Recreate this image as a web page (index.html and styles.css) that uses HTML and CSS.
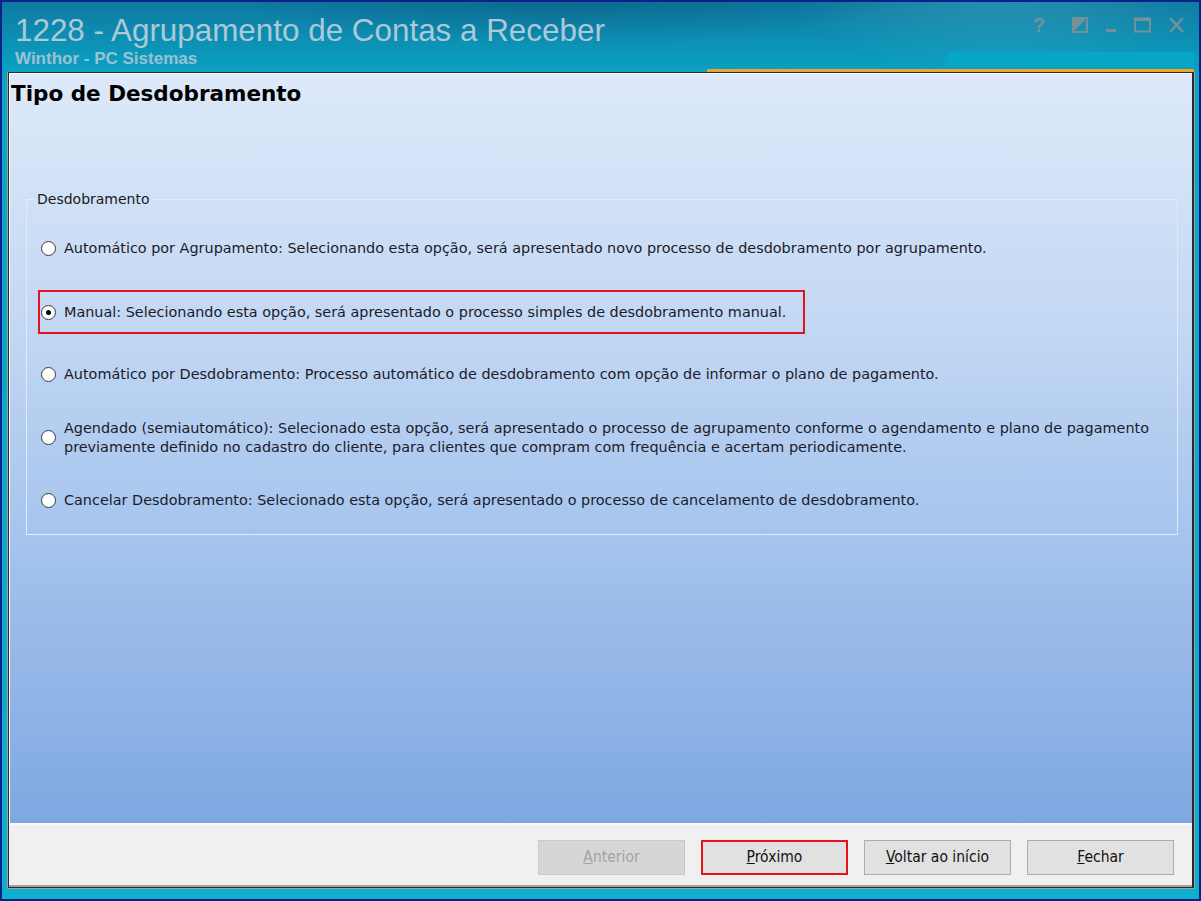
FILE: index.html
```html
<!DOCTYPE html>
<html lang="pt-BR">
<head>
    <meta charset="UTF-8">
    <title>1228 - Agrupamento de Contas a Receber</title>
    <link rel="stylesheet" href="styles.css">
</head>
<body>

<div class="window">

    <!-- Title bar -->
    <div class="titlebar">
        <div class="titles">
            <div class="title">1228 - Agrupamento de Contas a Receber</div>
            <div class="subtitle">Winthor - PC Sistemas</div>
        </div>
        <div class="controls">
            <span class="ctl help">?</span>
            <svg class="ctl" width="16" height="16" viewBox="0 0 16 16">
                <rect x="1" y="1" width="14" height="14" fill="none" stroke="#76909a" stroke-width="2"/>
                <polygon points="1,15 15,1 1,1" fill="#76909a"/>
            </svg>
            <svg class="ctl" width="12" height="16" viewBox="0 0 12 16">
                <rect x="1" y="12" width="10" height="3" fill="#76909a"/>
            </svg>
            <svg class="ctl" width="17" height="16" viewBox="0 0 17 16">
                <rect x="1" y="1.5" width="15" height="13" fill="none" stroke="#76909a" stroke-width="2"/>
                <rect x="1" y="1" width="15" height="3" fill="#76909a"/>
            </svg>
            <svg class="ctl" width="17" height="16" viewBox="0 0 17 16">
                <path d="M2 1 L15 15 M15 1 L2 15" stroke="#76909a" stroke-width="2.4"/>
            </svg>
        </div>
        <div class="band"></div>
        <div class="orange-line"></div>
    </div>

    <!-- Client area -->
    <div class="client">
        <div class="main">
            <h1 class="heading">Tipo de Desdobramento</h1>

            <fieldset class="group">
                <legend>Desdobramento</legend>

                <div class="row">
                    <label class="opt"><span class="radio"></span><span>Automático por Agrupamento: Selecionando esta opção, será apresentado novo processo de desdobramento por agrupamento.</span></label>
                </div>
                <div class="row">
                    <label class="opt marked"><span class="radio checked"></span><span>Manual: Selecionando esta opção, será apresentado o processo simples de desdobramento manual.</span></label>
                </div>
                <div class="row">
                    <label class="opt"><span class="radio"></span><span>Automático por Desdobramento: Processo automático de desdobramento com opção de informar o plano de pagamento.</span></label>
                </div>
                <div class="row">
                    <label class="opt"><span class="radio"></span><span>Agendado (semiautomático): Selecionado esta opção, será apresentado o processo de agrupamento conforme o agendamento e plano de pagamento<br>previamente definido no cadastro do cliente, para clientes que compram com frequência e acertam periodicamente.</span></label>
                </div>
                <div class="row">
                    <label class="opt"><span class="radio"></span><span>Cancelar Desdobramento: Selecionado esta opção, será apresentado o processo de cancelamento de desdobramento.</span></label>
                </div>
            </fieldset>
        </div>

        <div class="footer">
            <button class="btn" disabled><u>A</u>nterior</button>
            <button class="btn marked-btn"><u>P</u>róximo</button>
            <button class="btn"><u>V</u>oltar ao início</button>
            <button class="btn"><u>F</u>echar</button>
        </div>
    </div>

</div>

</body>
</html>
```

FILE: styles.css
```css
html, body {
    margin: 0;
    padding: 0;
}

body {
    width: 1201px;
    height: 901px;
    background: #0d1c8c;
    font-family: "DejaVu Sans", Verdana, sans-serif;
}

.window {
    box-sizing: border-box;
    width: 1201px;
    height: 901px;
    border: 2px solid #101f8e;
    display: flex;
    flex-direction: column;
    padding: 0 5px 11px 6px;
    background: linear-gradient(#0b78a0 0px, #0aa5c6 80px, #0cb0cc 100%);
}

/* Title bar */
.titlebar {
    position: relative;
    height: 70px;
    flex: none;
    display: flex;
    justify-content: space-between;
    background:
        radial-gradient(ellipse 520px 90px at 560px -20px, rgba(10, 80, 120, 0.55), transparent 70%),
        radial-gradient(ellipse 300px 120px at 1000px -10px, rgba(120, 200, 220, 0.25), transparent 70%),
        linear-gradient(#0f7aa0, #0aa2c4);
    margin: 0 -5px 0 -6px;
    padding: 0 14px 0 13px;
}

.titles {
    padding-top: 12px;
}

.title {
    font-family: "Liberation Sans", Arial, sans-serif;
    font-size: 31.4px;
    line-height: 34px;
    color: #acc9d8;
}

.subtitle {
    font-family: "Liberation Sans", Arial, sans-serif;
    font-weight: bold;
    font-size: 17px;
    line-height: 20px;
    color: #9cc2d2;
    margin-top: 1px;
}

.controls {
    display: flex;
    align-items: center;
    gap: 17px;
    height: 16px;
    margin-top: 15px;
}

.help {
    font-family: "Liberation Sans", Arial, sans-serif;
    font-weight: bold;
    font-size: 20px;
    color: #76909a;
    line-height: 16px;
    margin-right: 10px;
}

.band {
    position: absolute;
    left: 945px;
    right: 5px;
    top: 50px;
    height: 15px;
    background: #08a6c6;
}

.orange-line {
    position: absolute;
    left: 705px;
    right: 5px;
    top: 67px;
    height: 3px;
    background: linear-gradient(90deg, #e3a53a, #f3a323);
}

/* Client */
.client {
    flex: 1;
    display: flex;
    flex-direction: column;
    border: 1px solid #2b2b2b;
    border-right-width: 2px;
    outline: 1px solid #9aa0a6;
    background: #f0f0f0;
}

.main {
    flex: 1;
    border-top: 1px solid #ffffff;
    border-left: 1px solid #ffffff;
    background: linear-gradient(#dde9f9 0%, #c6daf4 30%, #a7c5ee 60%, #7fa8e1 100%);
    padding: 0 14px 0 16px;
}

.heading {
    margin: 7px 0 0 -15px;
    font-family: "DejaVu Sans", Verdana, sans-serif;
    font-size: 21.5px;
    font-weight: bold;
    line-height: 26px;
    color: #000000;
}

/* Group box */
.group {
    margin: 84px 0 0 0;
    padding: 0 0 0 14px;
    border: 1px solid #e2eaf5;
    border-top-color: #e6edf7;
    height: 344px;
    box-sizing: border-box;
}

.group legend {
    font-size: 14px;
    color: #1a1a1a;
    padding: 0 2px;
    margin-left: -6px;
    line-height: 16px;
}

.row {
    height: 63px;
    display: flex;
    align-items: center;
}

.row:first-of-type {
    margin-top: 10px;
}

.opt {
    display: inline-flex;
    align-items: center;
    gap: 8px;
    font-size: 14.4px;
    line-height: 19px;
    color: #1b1b2a;
}

.opt.marked {
    border: 2px solid #e8121e;
    padding: 11px 17px 10px 1px;
    margin-left: -3px;
}

.radio {
    flex: none;
    box-sizing: border-box;
    width: 15px;
    height: 15px;
    border: 1px solid #3a3a3a;
    border-radius: 50%;
    background: #ffffff;
    position: relative;
}

.radio.checked::after {
    content: "";
    position: absolute;
    left: 4px;
    top: 4px;
    width: 5px;
    height: 5px;
    border-radius: 50%;
    background: #000000;
}

/* Footer */
.footer {
    height: 64px;
    flex: none;
    box-sizing: border-box;
    border-top: 2px solid #f8f8f8;
    border-bottom: 2px solid #a0a0a0;
    display: flex;
    justify-content: flex-end;
    align-items: center;
    gap: 16px;
    padding: 4px 18px 0 0;
    background: #f0f0f0;
}

.btn {
    width: 147px;
    height: 35px;
    font-family: "DejaVu Sans Condensed", "DejaVu Sans", sans-serif;
    font-size: 15.5px;
    color: #111111;
    background: #e1e1e1;
    border: 1px solid #adadad;
    padding: 0;
}

.btn:disabled {
    background: #d6d6d6;
    border-color: #cacaca;
    color: #a3a3a3;
}

.btn.marked-btn {
    border: 2px solid #e8121e;
}
```
